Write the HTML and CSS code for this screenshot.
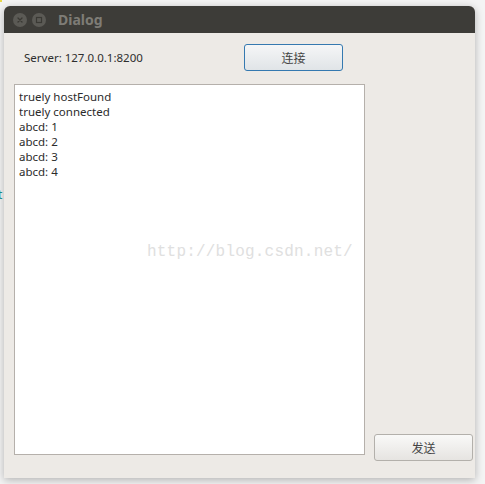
FILE: index.html
```html
<!DOCTYPE html>
<html>
<head>
<meta charset="utf-8">
<link rel="stylesheet" href="styles.css">
</head>
<body>
<div class="desk">
  <span class="dot"></span>
  <span class="edge-t">t</span>
  <div class="window">
    <div class="titlebar">
      <span class="wbtn"><svg width="14" height="14" viewBox="0 0 14 14"><path d="M5 5 L9 9 M9 5 L5 9" stroke="#3a3934" stroke-width="1.3" stroke-linecap="round"/></svg></span>
      <span class="wbtn"><svg width="14" height="14" viewBox="0 0 14 14"><rect x="4.5" y="4.5" width="5" height="5" fill="none" stroke="#3a3934" stroke-width="1.2"/></svg></span>
      <span class="title">Dialog</span>
    </div>
    <div class="content">
      <div class="toprow">
        <span class="server">Server: 127.0.0.1:8200</span>
        <button class="btn btn-connect">连接</button>
      </div>
      <div class="mainrow">
        <div class="log">
          <div>truely hostFound</div>
          <div>truely connected</div>
          <div>abcd: 1</div>
          <div>abcd: 2</div>
          <div>abcd: 3</div>
          <div>abcd: 4</div>
        </div>
        <button class="btn btn-send">发送</button>
      </div>
    </div>
  </div>
  <div class="watermark">http://blog.csdn.net/</div>
</div>
</body>
</html>
```

FILE: styles.css
```css
html, body {
  margin: 0;
  padding: 0;
}
body {
  width: 485px;
  height: 484px;
  overflow: hidden;
  background: #f4f4f4;
  font-family: "Noto Sans", "Noto Sans CJK SC", sans-serif;
}
.desk {
  position: relative;
  width: 485px;
  height: 484px;
  padding: 6px 0 0 4px;
  box-sizing: border-box;
}
.dot {
  position: absolute;
  left: 0;
  top: 0;
  width: 2px;
  height: 2px;
  background: #e8d84a;
}
.edge-t {
  position: absolute;
  left: -2px;
  top: 186px;
  font-size: 12px;
  color: #1a8a8a;
}
.window {
  width: 471px;
  height: 472px;
  border-radius: 6px 6px 0 0;
  box-shadow: 0 2px 8px rgba(0,0,0,0.28);
  overflow: hidden;
  display: flex;
  flex-direction: column;
  background: #edeae6;
}
.titlebar {
  height: 27px;
  flex: none;
  background: #3d3c38;
  display: flex;
  align-items: center;
  padding-left: 9px;
  gap: 5px;
}
.wbtn {
  width: 14px;
  height: 14px;
  border-radius: 50%;
  background: #5b5a55;
  display: flex;
}
.title {
  margin-left: 7px;
  font-family: "Noto Sans", sans-serif;
  font-weight: bold;
  font-size: 14px;
  color: #7e7c76;
}
.content {
  flex: 1;
  padding: 11px 0 0 10px;
  display: flex;
  flex-direction: column;
  gap: 13px;
}
.toprow {
  display: flex;
  align-items: center;
  height: 27px;
}
.server {
  padding-left: 10px;
  width: 220px;
  font-size: 11.5px;
  color: #2e2e2e;
}
.btn {
  font-family: "Noto Sans CJK SC", sans-serif;
  font-size: 12px;
  color: #444;
  border-radius: 3px;
  height: 27px;
  width: 99px;
  padding: 0;
  background: linear-gradient(#f9f9f8, #e6e4e1);
}
.btn-connect {
  border: 1px solid #3579b0;
  background: linear-gradient(#f5f6f7, #e0e4e7);
}
.btn-send {
  border: 1px solid #b3b0ab;
  align-self: end;
}
.mainrow {
  display: grid;
  grid-template-columns: 351px 99px;
  column-gap: 9px;
  height: 377px;
}
.log {
  height: 371px;
  box-sizing: border-box;
  background: #fff;
  border: 1px solid #b5b0ab;
  padding: 4px 4px;
  font-size: 11.5px;
  line-height: 15px;
  color: #2b2b2b;
}
.watermark {
  position: absolute;
  left: 147px;
  top: 243px;
  font-family: "Liberation Mono", monospace;
  font-size: 16px;
  color: #e0e0e0;
  letter-spacing: 0.2px;
}
```
